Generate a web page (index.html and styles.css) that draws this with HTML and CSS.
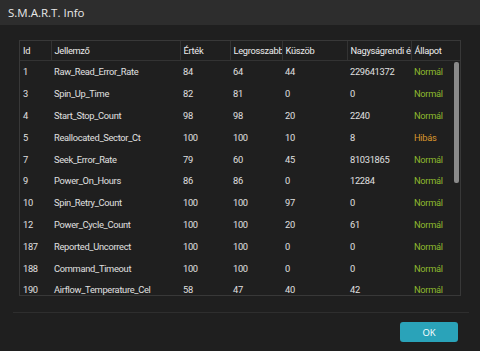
FILE: index.html
```html
<!DOCTYPE html>
<html lang="hu">
<head>
  <meta charset="UTF-8">
  <title>S.M.A.R.T. Info</title>
  <link rel="stylesheet" href="styles.css">
</head>
<body>
  <div class="dialog">
    <div class="titlebar">S.M.A.R.T. Info</div>

    <div class="content">
      <div class="grid-frame">
        <table class="smart-table">
          <colgroup>
            <col class="c-id">
            <col class="c-name">
            <col class="c-val">
            <col class="c-worst">
            <col class="c-thr">
            <col class="c-raw">
            <col class="c-state">
          </colgroup>
          <thead>
            <tr>
              <th>Id</th>
              <th>Jellemző</th>
              <th>Érték</th>
              <th>Legrosszabb</th>
              <th>Küszöb</th>
              <th>Nagyságrendi érték</th>
              <th>Állapot</th>
            </tr>
          </thead>
          <tbody>
            <tr><td>1</td><td>Raw_Read_Error_Rate</td><td>84</td><td>64</td><td>44</td><td>229641372</td><td class="ok">Normál</td></tr>
            <tr><td>3</td><td>Spin_Up_Time</td><td>82</td><td>81</td><td>0</td><td>0</td><td class="ok">Normál</td></tr>
            <tr><td>4</td><td>Start_Stop_Count</td><td>98</td><td>98</td><td>20</td><td>2240</td><td class="ok">Normál</td></tr>
            <tr><td>5</td><td>Reallocated_Sector_Ct</td><td>100</td><td>100</td><td>10</td><td>8</td><td class="bad">Hibás</td></tr>
            <tr><td>7</td><td>Seek_Error_Rate</td><td>79</td><td>60</td><td>45</td><td>81031865</td><td class="ok">Normál</td></tr>
            <tr><td>9</td><td>Power_On_Hours</td><td>86</td><td>86</td><td>0</td><td>12284</td><td class="ok">Normál</td></tr>
            <tr><td>10</td><td>Spin_Retry_Count</td><td>100</td><td>100</td><td>97</td><td>0</td><td class="ok">Normál</td></tr>
            <tr><td>12</td><td>Power_Cycle_Count</td><td>100</td><td>100</td><td>20</td><td>61</td><td class="ok">Normál</td></tr>
            <tr><td>187</td><td>Reported_Uncorrect</td><td>100</td><td>100</td><td>0</td><td>0</td><td class="ok">Normál</td></tr>
            <tr><td>188</td><td>Command_Timeout</td><td>100</td><td>100</td><td>0</td><td>0</td><td class="ok">Normál</td></tr>
            <tr><td>190</td><td>Airflow_Temperature_Cel</td><td>58</td><td>47</td><td>40</td><td>42</td><td class="ok">Normál</td></tr>
          </tbody>
        </table>
        <div class="scroll-thumb"></div>
      </div>
    </div>

    <div class="footer">
      <button type="button" class="btn-ok">OK</button>
    </div>
  </div>
</body>
</html>
```

FILE: styles.css
```css
html, body {
  margin: 0;
  padding: 0;
  background-color: #1f1f1f;
}
body {
  font-family: Roboto, "Open Sans", sans-serif;
  color: #e2e2e2;
}
.dialog {
  width: 480px;
  height: 351px;
  display: flex;
  flex-direction: column;
  background-color: #1f1f1f;
}
.titlebar {
  height: 25px;
  line-height: 25px;
  padding-left: 8px;
  background-color: #2d2d2d;
  font-family: "Open Sans", sans-serif;
  font-size: 11.5px;
  color: #e8e8e8;
}
.content {
  height: 288px;
  box-sizing: border-box;
  margin: 0 11px 0 13px;
  padding: 15px 8px 0 6px;
  border-bottom: 1px solid #2e2e2e;
}
.grid-frame {
  position: relative;
  height: 256px;
  border: 1px solid #383838;
  overflow: hidden;
  box-sizing: border-box;
}
.smart-table {
  width: 100%;
  table-layout: fixed;
  border-collapse: collapse;
  font-size: 9.3px;
  letter-spacing: -0.3px;
}
.c-id { width: 31px; }
.c-name { width: 129px; }
.c-val { width: 50px; }
.c-worst { width: 52px; }
.c-thr { width: 65px; }
.c-raw { width: 64px; }
.smart-table th,
.smart-table td {
  text-align: left;
  white-space: nowrap;
  overflow: hidden;
  padding: 0 0 0 3px;
}
.smart-table th {
  height: 19px;
  font-weight: normal;
  color: #ececec;
  border-right: 1px solid #333;
  border-bottom: 1px solid #333;
}
.smart-table th:last-child {
  border-right: none;
}
.smart-table td {
  height: 21.8px;
  color: #e0e0e0;
}
.smart-table td.ok {
  color: #8db92e;
}
.smart-table td.bad {
  color: #d9962c;
}
.scroll-thumb {
  position: absolute;
  right: 1px;
  top: 21px;
  width: 5px;
  height: 121px;
  border-radius: 2px;
  background-color: #8a8a8a;
}
.footer {
  display: flex;
  justify-content: flex-end;
  padding: 9px 22px 0 0;
}
.btn-ok {
  width: 58px;
  height: 20px;
  border: none;
  border-radius: 3px;
  background-color: #2aa3b9;
  color: #fff;
  font-family: "Open Sans", sans-serif;
  font-size: 9.5px;
  padding: 0;
}
```
